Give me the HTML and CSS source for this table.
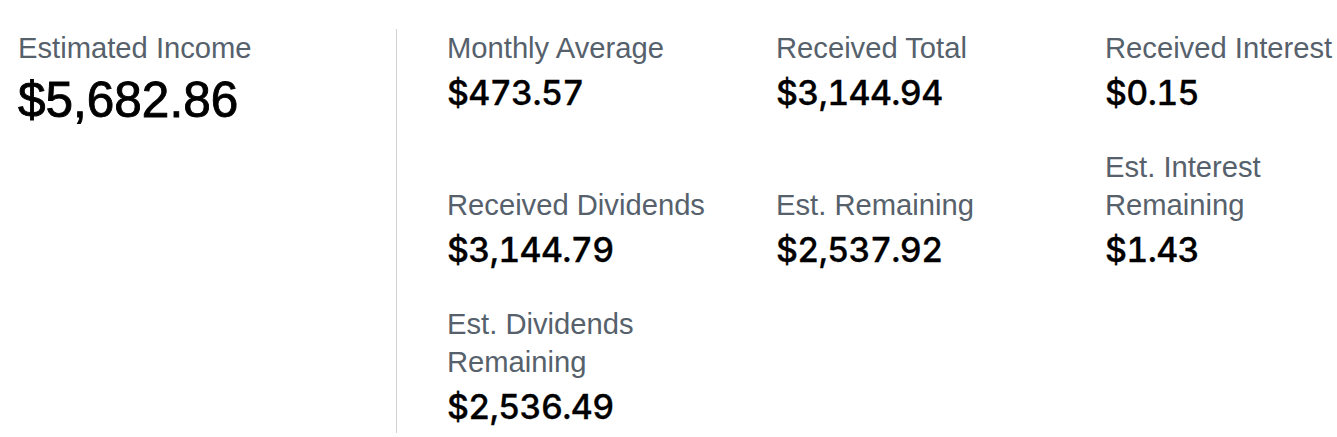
FILE: index.html
```html
<!DOCTYPE html>
<html lang="en">
<head>
<meta charset="utf-8">
<title>Income Summary</title>
<link rel="stylesheet" href="styles.css">
</head>
<body>
<div class="summary">
  <section class="total">
    <div class="label">Estimated Income</div>
    <div class="total-value">$5,682.86</div>
  </section>
  <section class="stats">
    <div class="stat">
      <div class="label">Monthly Average</div>
      <div class="value">$473.57</div>
    </div>
    <div class="stat">
      <div class="label">Received Total</div>
      <div class="value">$3,144.94</div>
    </div>
    <div class="stat">
      <div class="label">Received Interest</div>
      <div class="value">$0.15</div>
    </div>
    <div class="stat">
      <div class="label">Received Dividends</div>
      <div class="value">$3,144.79</div>
    </div>
    <div class="stat">
      <div class="label">Est. Remaining</div>
      <div class="value">$2,537.92</div>
    </div>
    <div class="stat">
      <div class="label">Est. Interest Remaining</div>
      <div class="value">$1.43</div>
    </div>
    <div class="stat">
      <div class="label">Est. Dividends Remaining</div>
      <div class="value">$2,536.49</div>
    </div>
  </section>
</div>
</body>
</html>
```

FILE: styles.css
```css
html, body {
  margin: 0;
  padding: 0;
  background: #ffffff;
}

body {
  font-family: "Liberation Sans", Arial, sans-serif;
  color: #000;
}

.summary {
  display: flex;
  align-items: flex-start;
  padding: 29px 0 0 18px;
}

.total {
  width: 378px;
  flex: none;
}

.label {
  font-size: 29.2px;
  line-height: 38px;
  color: #56616c;
}

.total-value {
  font-family: "Liberation Sans", Arial, sans-serif;
  font-size: 49.5px;
  font-weight: 400;
  line-height: 66px;
  -webkit-text-stroke: 0.9px #000;
}

.stats {
  border-left: 1px solid #d2d2d2;
  padding-left: 50px;
  display: grid;
  grid-template-columns: repeat(3, 280px);
  column-gap: 49px;
  row-gap: 29px;
  align-items: end;
}

.value {
  font-family: Inter, "Liberation Sans", sans-serif;
  font-size: 34px;
  font-weight: 500;
  line-height: 52px;
  font-variant-numeric: tabular-nums;
  letter-spacing: -0.65px;
  -webkit-text-stroke: 0.3px #000;
}
```
